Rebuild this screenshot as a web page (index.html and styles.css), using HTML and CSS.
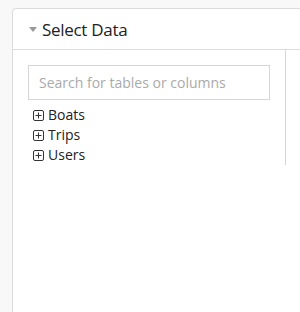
FILE: index.html
```html
<!DOCTYPE html>
<html>
<head>
<meta charset="utf-8">
<link rel="stylesheet" href="styles.css">
</head>
<body>
<div class="panel">
  <div class="panel-header">
    <span class="caret"></span>
    <span class="title">Select Data</span>
  </div>
  <div class="panel-body">
    <div class="data-col">
      <div class="search">Search for tables or columns</div>
      <ul class="tree">
        <li><svg class="plus" width="11" height="11" viewBox="0 0 11 11"><rect x="0.5" y="0.5" width="10" height="10" rx="1.5" fill="none" stroke="#333" stroke-width="1"/><path d="M5.5 2.5v6M2.5 5.5h6" stroke="#333" stroke-width="1"/></svg>Boats</li>
        <li><svg class="plus" width="11" height="11" viewBox="0 0 11 11"><rect x="0.5" y="0.5" width="10" height="10" rx="1.5" fill="none" stroke="#333" stroke-width="1"/><path d="M5.5 2.5v6M2.5 5.5h6" stroke="#333" stroke-width="1"/></svg>Trips</li>
        <li><svg class="plus" width="11" height="11" viewBox="0 0 11 11"><rect x="0.5" y="0.5" width="10" height="10" rx="1.5" fill="none" stroke="#333" stroke-width="1"/><path d="M5.5 2.5v6M2.5 5.5h6" stroke="#333" stroke-width="1"/></svg>Users</li>
      </ul>
    </div>
    <div class="side-col"></div>
  </div>
</div>
</body>
</html>
```
FILE: styles.css
```css
html, body {
  margin: 0;
  padding: 0;
  background: #f8f8f8;
  overflow: hidden;
  width: 300px;
  height: 312px;
}
body {
  font-family: "Open Sans", sans-serif;
  padding: 8px 0 0 12px;
  box-sizing: border-box;
}
.panel {
  height: 304px;
  box-sizing: border-box;
  background: #fff;
  border-top: 1px solid #dcdcdc;
  border-left: 1px solid #dcdcdc;
  border-radius: 4px 0 0 0;
}
.panel-header {
  height: 40px;
  border-bottom: 1px solid #dcdcdc;
  display: flex;
  align-items: center;
  padding-left: 16px;
}
.caret {
  width: 0;
  height: 0;
  border-left: 4px solid transparent;
  border-right: 4px solid transparent;
  border-top: 5px solid #999;
  margin-right: 5px;
  margin-top: 1px;
}
.title {
  font-size: 17px;
  color: #222;
  letter-spacing: -0.3px;
}
.panel-body {
  display: flex;
}
.data-col {
  width: 273px;
  padding: 15px 15px 0 15px;
  box-sizing: border-box;
  border-right: 1px solid #d6d6d6;
}
.search {
  height: 35px;
  border: 1px solid #d6d6d6;
  box-sizing: border-box;
  font-size: 14px;
  color: #aaa;
  line-height: 33px;
  padding-left: 10px;
}
.tree {
  list-style: none;
  margin: 5px 0 0 0;
  padding: 0 0 0 5px;
}
.tree li {
  height: 20px;
  line-height: 20px;
  font-size: 14px;
  color: #222;
  display: flex;
  align-items: center;
}
.plus {
  margin-right: 4px;
}
```
